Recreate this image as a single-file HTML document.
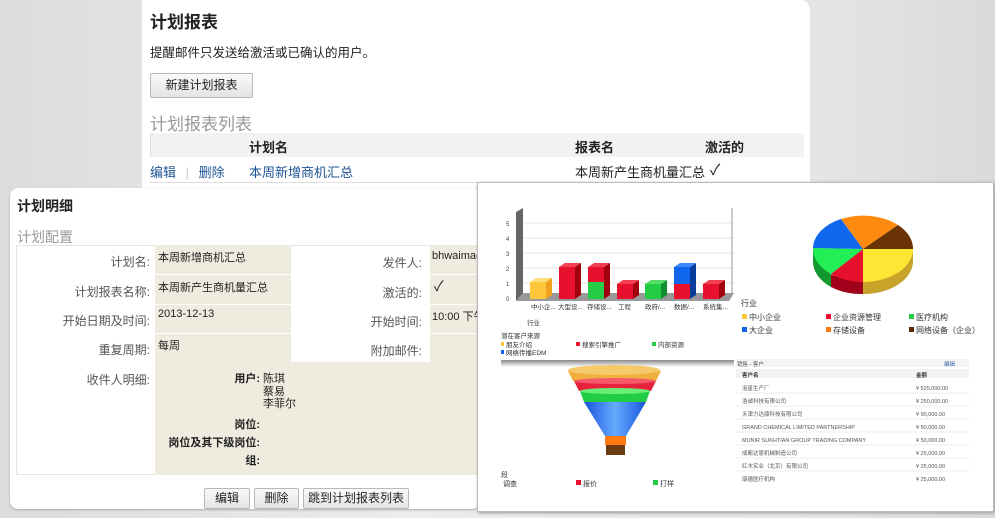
<!DOCTYPE html>
<html><head><meta charset="utf-8"><style>
*{margin:0;padding:0;box-sizing:border-box}
body{width:995px;height:513px;overflow:hidden;position:relative;background:linear-gradient(90deg,#dcdcdc,#ececec 40%,#e6e6e6 80%,#dadada);font-family:"Liberation Sans","Noto Sans CJK SC",sans-serif;color:#222}
.abs{position:absolute}
.top{left:142px;top:0;width:668px;height:188px;background:#fff;border-radius:0 10px 0 0}
.btn{position:absolute;border:1px solid #b8b8b8;border-radius:2px;background:linear-gradient(#fafafa,#e4e4e4);font-size:12px;text-align:center;color:#222}
.det{left:10px;top:188px;width:470px;height:321px;background:#fff;border-radius:8px;box-shadow:0 1px 2px #aaa}
.lbl{position:absolute;font-size:12px;color:#555;text-align:right;white-space:nowrap}
.val{position:absolute;font-size:11px;color:#222;white-space:nowrap}
.bg{position:absolute;background:#efebdf}
.chart{left:477px;top:182px;width:517px;height:330px;background:#fff;border:1px solid #bbb;box-shadow:1px 1px 3px #999}
</style></head><body>
<div class="abs top">
 <div class="abs" style="left:8px;top:8px;font-size:17px;font-weight:bold">计划报表</div>
 <div class="abs" style="left:8px;top:42px;font-size:12.5px">提醒邮件只发送给激活或已确认的用户。</div>
 <div class="btn" style="left:8px;top:73px;width:103px;height:25px;line-height:23px">新建计划报表</div>
 <div class="abs" style="left:8px;top:110px;font-size:17px;color:#999">计划报表列表</div>
 <div class="abs" style="left:8px;top:133px;width:654px;height:24px;background:#f2f2f2;border-left:1px solid #e0e0e0"></div>
 <div class="abs" style="left:107px;top:137px;font-size:13px;font-weight:bold">计划名</div>
 <div class="abs" style="left:433px;top:137px;font-size:13px;font-weight:bold">报表名</div>
 <div class="abs" style="left:563px;top:137px;font-size:13px;font-weight:bold">激活的</div>
 <div class="abs" style="left:8px;top:162px;font-size:13px;color:#1d5493">编辑 <span style="color:#ccc;margin:0 6px">|</span> 删除</div>
 <div class="abs" style="left:107px;top:162px;font-size:13px;color:#1d5493">本周新增商机汇总</div>
 <div class="abs" style="left:433px;top:162px;font-size:13px">本周新产生商机量汇总</div>
 <div class="abs" style="left:568px;top:159px;font-size:15px">✓</div>
 <div class="abs" style="left:8px;top:182px;width:654px;height:1px;background:#ddd"></div>
</div>
<div class="abs det">
 <div class="abs" style="left:7px;top:8px;font-size:14px;font-weight:bold">计划明细</div>
 <div class="abs" style="left:7px;top:39px;font-size:14px;color:#999">计划配置</div>
 <div class="abs" style="left:6px;top:57px;width:470px;height:230px;border:1px solid #e4e4e4"></div>
 <div class="bg" style="left:145px;top:57px;width:136px;height:230px"></div>
 <div class="bg" style="left:420px;top:57px;width:60px;height:117px"></div>
 <div class="bg" style="left:145px;top:174px;width:335px;height:113px"></div>
 <div class="abs" style="left:145px;top:86px;width:335px;height:1px;background:#fff"></div>
 <div class="abs" style="left:145px;top:116px;width:335px;height:1px;background:#fff"></div>
 <div class="abs" style="left:145px;top:145px;width:335px;height:1px;background:#fff"></div>
 <div class="lbl" style="left:10px;width:130px;top:65px">计划名:</div>
 <div class="lbl" style="left:10px;width:130px;top:95px">计划报表名称:</div>
 <div class="lbl" style="left:10px;width:130px;top:124px">开始日期及时间:</div>
 <div class="lbl" style="left:10px;width:130px;top:153px">重复周期:</div>
 <div class="lbl" style="left:10px;width:130px;top:183px">收件人明细:</div>
 <div class="lbl" style="left:300px;width:112px;top:66px">发件人:</div>
 <div class="lbl" style="left:300px;width:112px;top:96px">激活的:</div>
 <div class="lbl" style="left:300px;width:112px;top:125px">开始时间:</div>
 <div class="lbl" style="left:300px;width:112px;top:154px">附加邮件:</div>
 <div class="val" style="left:148px;top:61px">本周新增商机汇总</div>
 <div class="val" style="left:148px;top:91px">本周新产生商机量汇总</div>
 <div class="val" style="left:148px;top:120px">2013-12-13</div>
 <div class="val" style="left:148px;top:149px">每周</div>
 <div class="val" style="left:422px;top:62px">bhwaimac</div>
 <div class="val" style="left:424px;top:88px;font-size:14px">✓</div>
 <div class="val" style="left:422px;top:120px">10:00 下午</div>
 <div class="val" style="left:150px;top:185px;width:100px;text-align:right;font-weight:bold;line-height:13px">用户:</div>
 <div class="val" style="left:253px;top:185px;line-height:12.5px">陈琪<br>蔡易<br>李菲尔</div>
 <div class="val" style="left:150px;top:228px;width:100px;text-align:right;font-weight:bold">岗位:</div>
 <div class="val" style="left:120px;top:246px;width:130px;text-align:right;font-weight:bold">岗位及其下级岗位:</div>
 <div class="val" style="left:150px;top:264px;width:100px;text-align:right;font-weight:bold">组:</div>
 <div class="btn" style="left:194px;top:300px;width:46px;height:21px;line-height:19px">编辑</div>
 <div class="btn" style="left:244px;top:300px;width:45px;height:21px;line-height:19px">删除</div>
 <div class="btn" style="left:293px;top:300px;width:106px;height:21px;line-height:19px">跳到计划报表列表</div>
</div>
<div class="abs chart">
<svg width="517" height="330" viewBox="477 182 517 330" style="font-family:'Liberation Sans','Noto Sans CJK SC',sans-serif">
 <rect x="500" y="205" width="233" height="155" fill="#fff"/>
 <g stroke="#e6e6e6"><line x1="522" y1="222" x2="733" y2="222"/><line x1="522" y1="237" x2="733" y2="237"/><line x1="522" y1="252" x2="733" y2="252"/><line x1="522" y1="267" x2="733" y2="267"/><line x1="522" y1="282" x2="733" y2="282"/></g>
 <polygon points="515,211 522,207 522,292 515,300" fill="#666"/>
 <polygon points="515,300 522,292 733,292 728,300" fill="#999"/>
 <line x1="731" y1="207" x2="731" y2="294" stroke="#999"/>
 <g font-size="6" fill="#444"><text x="505" y="300">0</text><text x="505" y="285">1</text><text x="505" y="270">2</text><text x="505" y="255">3</text><text x="505" y="240">4</text><text x="505" y="225">5</text></g>
 <g>
 <rect x="529" y="281" width="16" height="17" fill="#fcc53a"/><polygon points="545,281 551,277 551,294 545,298" fill="#f1a21c"/><polygon points="529,281 535,277 551,277 545,281" fill="#fddc7a"/>
 <rect x="558" y="266" width="16" height="32" fill="#e8112d"/><polygon points="574,266 580,262 580,294 574,298" fill="#a3000f"/><polygon points="558,266 564,262 580,262 574,266" fill="#f04050"/>
 <rect x="587" y="266" width="16" height="15" fill="#e8112d"/><rect x="587" y="281" width="16" height="17" fill="#22cc44"/><polygon points="603,266 609,262 609,294 603,298" fill="#a3000f"/><polygon points="587,266 593,262 609,262 603,266" fill="#f04050"/>
 <rect x="616" y="283" width="16" height="15" fill="#e8112d"/><polygon points="632,283 638,279 638,294 632,298" fill="#a3000f"/><polygon points="616,283 622,279 638,279 632,283" fill="#f04050"/>
 <rect x="644" y="283" width="16" height="15" fill="#22cc44"/><polygon points="660,283 666,279 666,294 660,298" fill="#129030"/><polygon points="644,283 650,279 666,279 660,283" fill="#55dd66"/>
 <rect x="673" y="266" width="16" height="17" fill="#1166ee"/><rect x="673" y="283" width="16" height="15" fill="#e8112d"/><polygon points="689,266 695,262 695,294 689,298" fill="#0a3c99"/><polygon points="673,266 679,262 695,262 689,266" fill="#3b88ff"/>
 <rect x="702" y="283" width="16" height="15" fill="#e8112d"/><polygon points="718,283 724,279 724,294 718,298" fill="#a3000f"/><polygon points="702,283 708,279 724,279 718,283" fill="#f04050"/>
 </g>
 <g font-size="6.5" fill="#333"><text x="530" y="308">中小企...</text><text x="557" y="308">大型设...</text><text x="586" y="308">存储设...</text><text x="617" y="308">工程</text><text x="644" y="308">政府/...</text><text x="673" y="308">数据/...</text><text x="702" y="308">系统集...</text>
 <text x="526" y="324">行业</text><text x="500" y="337">潜在客户来源</text>
 <rect x="500" y="341" width="3" height="4" fill="#fcc53a"/><text x="505" y="346">朋友介绍</text>
 <rect x="575" y="341" width="4" height="4" fill="#e8112d"/><text x="581" y="346">搜索引擎推广</text>
 <rect x="651" y="341" width="4" height="4" fill="#22cc44"/><text x="657" y="346">内部资源</text>
 <rect x="500" y="349" width="3" height="4" fill="#1166ee"/><text x="505" y="354">网络传播EDM</text></g>
 <rect x="500" y="359" width="233" height="7" fill="url(#sh)"/>
 <defs><linearGradient id="sh" x1="0" y1="0" x2="0" y2="1"><stop offset="0" stop-color="#888"/><stop offset="1" stop-color="#fff"/></linearGradient>
 <linearGradient id="bl" x1="0" x2="1"><stop offset="0" stop-color="#1a55dd"/><stop offset=".5" stop-color="#66aaff"/><stop offset="1" stop-color="#1a55dd"/></linearGradient></defs>
 <g transform="translate(862,248)">
  <path d="M-50,0 v12 a50,33 0 0 0 100,0 v-12 z" fill="#999"/>
  <path d="M0,0 L50,0 v12 A50,33 0 0 1 0,45 v-12 z" fill="#c9a42a"/>
  <path d="M0,33 v12 A50,33 0 0 1 -32,38 v-12 z" fill="#a0001a"/>
  <path d="M-32,26 v12 A50,33 0 0 1 -50,12 v-12 z" fill="#119930"/>
  <path d="M0,0 L50,0 A50,33 0 0 1 0,33 Z" fill="#ffe534"/>
  <path d="M0,0 L0,33 A50,33 0 0 1 -32,25 Z" fill="#e8112d"/>
  <path d="M0,0 L-32,25 A50,33 0 0 1 -50,-1 Z" fill="#22ee55"/>
  <path d="M0,0 L-50,-1 A50,33 0 0 1 -22,-30 Z" fill="#1166ee"/>
  <path d="M0,0 L-22,-30 A50,33 0 0 1 35,-24 Z" fill="#ff8a10"/>
  <path d="M0,0 L35,-24 A50,33 0 0 1 50,0 Z" fill="#6a3306"/>
 </g>
 <g font-size="8" fill="#333"><text x="740" y="305">行业</text>
 <rect x="741" y="313" width="5" height="5" fill="#fcc53a"/><text x="748" y="319">中小企业</text>
 <rect x="825" y="313" width="5" height="5" fill="#e8112d"/><text x="832" y="319">企业资源管理</text>
 <rect x="908" y="313" width="5" height="5" fill="#22cc44"/><text x="915" y="319">医疗机构</text>
 <rect x="741" y="326" width="5" height="5" fill="#1166ee"/><text x="748" y="332">大企业</text>
 <rect x="825" y="326" width="5" height="5" fill="#ff7a10"/><text x="832" y="332">存储设备</text>
 <rect x="908" y="326" width="5" height="5" fill="#5a2a06"/><text x="915" y="332">网络设备（企业）</text></g>
 <rect x="735" y="358" width="233" height="8" fill="#f4f4f4"/>
 <g font-size="5.5" fill="#555"><text x="736" y="365">销售 - 客户</text><text x="943" y="365" fill="#3366aa">编辑</text>
 <rect x="735" y="368" width="233" height="9" fill="#f2f2f2"/>
 <text x="741" y="376" font-weight="bold" fill="#333">客户名</text><text x="915" y="376" font-weight="bold" fill="#333">金额</text>
 <text x="741" y="389">泡星生产厂</text><text x="915" y="389">¥ 525,000.00</text>
 <text x="741" y="402">浩诚科技有限公司</text><text x="915" y="402">¥ 250,000.00</text>
 <text x="741" y="415">天津力达康科技有限公司</text><text x="915" y="415">¥ 90,000.00</text>
 <text x="741" y="428">GRAND CHEMICAL LIMITED PARTNERSHIP</text><text x="915" y="428">¥ 50,000.00</text>
 <text x="741" y="441">MUNIR SUKHTIAN GROUP TRADING COMPANY</text><text x="915" y="441">¥ 50,000.00</text>
 <text x="741" y="454">成都达恩机械制造公司</text><text x="915" y="454">¥ 25,000.00</text>
 <text x="741" y="467">红木实业（北京）有限公司</text><text x="915" y="467">¥ 25,000.00</text>
 <text x="741" y="480">康德医疗机构</text><text x="915" y="480">¥ 25,000.00</text></g>
 <g stroke="#eee"><line x1="735" y1="392" x2="968" y2="392"/><line x1="735" y1="405" x2="968" y2="405"/><line x1="735" y1="418" x2="968" y2="418"/><line x1="735" y1="431" x2="968" y2="431"/><line x1="735" y1="444" x2="968" y2="444"/><line x1="735" y1="457" x2="968" y2="457"/><line x1="735" y1="470" x2="968" y2="470"/></g>
 <path d="M567,370 L660,370 L655,380 L572,380 Z" fill="#f0b040"/><ellipse cx="613" cy="369" rx="46" ry="5" fill="#f6c96a"/>
 <path d="M573,380 L655,380 L650,390 L578,390 Z" fill="#e8213d"/><ellipse cx="614" cy="380" rx="41" ry="3" fill="#f55a6a"/>
 <path d="M579,390 L649,390 L645,401 L583,401 Z" fill="#22cc44"/><ellipse cx="614" cy="390" rx="35" ry="3" fill="#66ee77"/>
 <path d="M583,401 L645,401 L625,435 L604,435 Z" fill="url(#bl)"/>
 <rect x="604" y="435" width="21" height="9" fill="#ff7a10"/>
 <rect x="605" y="444" width="19" height="10" fill="#6a3a10"/>
 <g font-size="7" fill="#333"><text x="500" y="476">段</text><text x="502" y="485">调查</text>
 <rect x="575" y="479" width="5" height="5" fill="#e8112d"/><text x="582" y="485">报价</text>
 <rect x="652" y="479" width="5" height="5" fill="#22cc44"/><text x="659" y="485">打样</text></g>
</svg>
</div>
</body></html>
